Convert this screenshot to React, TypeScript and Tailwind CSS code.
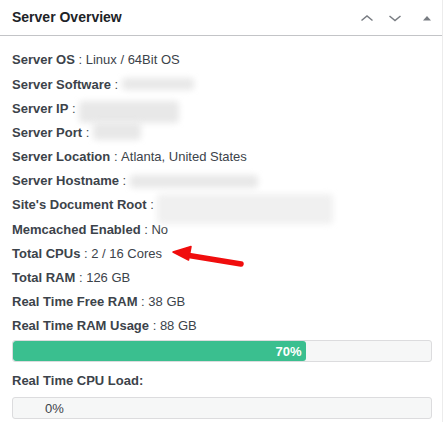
import React from "react";

const Blur = ({ w, h, className = "" }: { w: string; h: string; className?: string }) => (
  <span className={`inline-block align-middle rounded-sm bg-[#e8e8e8] blur-[3px] ${w} ${h} ${className}`} />
);

const Row = ({ label, children }: { label: string; children?: React.ReactNode }) => (
  <div className="h-[24.2px] flex items-center whitespace-nowrap">
    <span className="font-semibold text-[#3c434a]">{label}</span>
    <span className="text-[#3c434a]">&nbsp;:&nbsp;</span>
    {children}
  </div>
);

export default function App() {
  return (
    <div
      className="relative w-[443px] h-[422px] bg-white border-r border-[#ececec] overflow-hidden text-[13px] text-[#3c434a]"
      style={{ fontFamily: '"Liberation Sans", Arial, sans-serif' }}
    >
      <div className="h-[36px] border-b border-[#c3c4c7] flex items-center justify-between pl-3 pr-[8px]">
        <h2 className="text-[14px] font-semibold text-[#1d2327]">Server Overview</h2>
        <div className="flex items-center gap-[14px] text-[#787c82]">
          <svg width="14" height="10" viewBox="0 0 14 10" fill="none" stroke="currentColor" strokeWidth="1.5">
            <path d="M1.5 7.5 L7 3 L12.5 7.5" />
          </svg>
          <svg width="14" height="10" viewBox="0 0 14 10" fill="none" stroke="currentColor" strokeWidth="1.5">
            <path d="M1.5 3 L7 7.5 L12.5 3" />
          </svg>
          <svg width="14" height="10" viewBox="0 0 14 10" className="ml-[4px]">
            <path d="M3 7.5 L7 3 L11 7.5 Z" fill="currentColor" />
          </svg>
        </div>
      </div>

      <div className="px-3 pt-[12px]">
        <Row label="Server OS">
          <span>Linux / 64Bit OS</span>
        </Row>
        <Row label="Server Software">
          <Blur w="w-[72px]" h="h-[12px]" />
        </Row>
        <Row label="Server IP">
          <Blur w="w-[100px]" h="h-[22px]" className="translate-y-[4px]" />
        </Row>
        <Row label="Server Port">
          <Blur w="w-[48px]" h="h-[18px]" className="translate-y-[-2px]" />
        </Row>
        <Row label="Server Location">
          <span>Atlanta, United States</span>
        </Row>
        <Row label="Server Hostname">
          <Blur w="w-[128px]" h="h-[13px]" />
        </Row>
        <Row label="Site's Document Root">
          <Blur w="w-[176px]" h="h-[30px]" className="translate-y-[4px] bg-[#f0f0f0]" />
        </Row>
        <Row label="Memcached Enabled">
          <span>No</span>
        </Row>
        <Row label="Total CPUs">
          <span>2 / 16 Cores</span>
        </Row>
        <Row label="Total RAM">
          <span>126 GB</span>
        </Row>
        <Row label="Real Time Free RAM">
          <span>38 GB</span>
        </Row>
        <Row label="Real Time RAM Usage">
          <span>88 GB</span>
        </Row>

        <div className="mt-[2px] h-[22px] w-[420px] rounded-[3px] border border-[#dcdcde] bg-[#f6f7f7] overflow-hidden">
          <div className="h-full w-[70%] bg-[#3abf8f] rounded-[3px] flex items-center justify-end pr-[4px] text-white font-semibold">
            70%
          </div>
        </div>

        <div className="h-6 flex items-center mt-[6px] font-semibold">Real Time CPU Load:</div>

        <div className="mt-[5px] h-[22px] w-[420px] rounded-[3px] border border-[#dcdcde] bg-[#f6f7f7] flex items-center pl-[32px]">
          0%
        </div>
      </div>

      <svg className="absolute left-0 top-0 pointer-events-none" width="443" height="422">
        <path d="M241 264 L186 255" stroke="#f00d0d" strokeWidth="5.5" strokeLinecap="round" fill="none" />
        <path d="M173 252 L191 246.5 L188.5 260 Z" fill="#f00d0d" stroke="#f00d0d" strokeWidth="1.5" strokeLinejoin="round" />
      </svg>
    </div>
  );
}
